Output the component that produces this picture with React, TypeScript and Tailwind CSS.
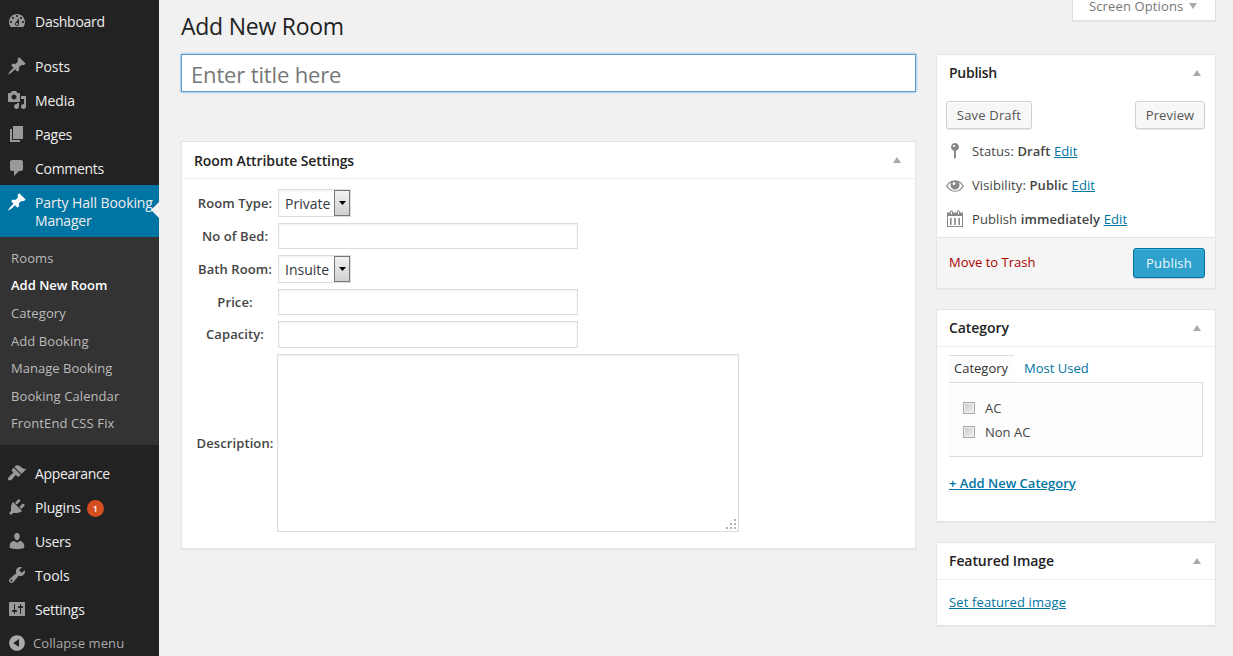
import React from "react";

const paths = {
  dashboard:
    "M3.76 16h12.48c1.1-1.37 1.76-3.11 1.76-5 0-4.42-3.58-8-8-8s-8 3.58-8 8c0 1.89.66 3.63 1.76 5zM10 4c.55 0 1 .45 1 1s-.45 1-1 1-1-.45-1-1 .45-1 1-1zM6 6c.55 0 1 .45 1 1s-.45 1-1 1-1-.45-1-1 .45-1 1-1zm8 0c.55 0 1 .45 1 1s-.45 1-1 1-1-.45-1-1 .45-1 1-1zm-5.37 5.55L12 7v6c0 1.1-.9 2-2 2s-2-.9-2-2c0-.57.24-1.08.63-1.45zM4 10c.55 0 1 .45 1 1s-.45 1-1 1-1-.45-1-1 .45-1 1-1zm12 0c.55 0 1 .45 1 1s-.45 1-1 1-1-.45-1-1 .45-1 1-1zm-5 3c0-.55-.45-1-1-1s-1 .45-1 1 .45 1 1 1 1-.45 1-1z",
  pin: "M10.44 3.02l1.82-1.82 6.36 6.35-1.83 1.82c-1.05-.68-2.48-.57-3.41.36l-.75.75c-.92.93-1.04 2.35-.35 3.41l-1.83 1.82-2.41-2.41-2.8 2.79c-.42.42-3.38 2.71-3.8 2.29s1.86-3.39 2.28-3.81l2.79-2.79L4.1 9.36l1.83-1.82c1.05.69 2.48.57 3.4-.36l.75-.75c.93-.92 1.05-2.35.36-3.41z",
  media:
    "M13 11V4c0-.55-.45-1-1-1h-1.67L9 1H5L3.67 3H2c-.55 0-1 .45-1 1v7c0 .55.45 1 1 1h10c.55 0 1-.45 1-1zM7 4.5c1.38 0 2.5 1.12 2.5 2.5S8.38 9.5 7 9.5 4.5 8.38 4.5 7 5.62 4.5 7 4.5zM14 6h5v10.5c0 1.38-1.12 2.5-2.5 2.5S14 17.88 14 16.5s1.12-2.5 2.5-2.5c.17 0 .34.02.5.05V9h-3V6zm-4 8.05V13h2v3.5c0 1.38-1.12 2.5-2.5 2.5S7 17.88 7 16.5 8.12 14 9.5 14c.17 0 .34.02.5.05z",
  page: "M6 15V2h10v13H6zm-1 1h8v2H3V5h2v11z",
  comments: "M5 2h9c1.1 0 2 .9 2 2v7c0 1.1-.9 2-2 2h-2l-5 5v-5H5c-1.1 0-2-.9-2-2V4c0-1.1.9-2 2-2z",
  appearance:
    "M14.48 11.06L7.41 3.99l1.5-1.5c.5-.56 2.3-.47 3.51.32 1.21.8 1.43 1.28 2.91 2.1 1.18.64 2.45 1.26 4.45.85zm-.71.71L6.7 4.7 4.93 6.47c-.39.39-.39 1.02 0 1.41l1.06 1.06c.39.39.39 1.03 0 1.42-.6.6-1.43 1.11-2.21 1.69-.35.26-.7.53-1.01.84C1.43 14.23.4 16.08 1.4 17.07c.99 1 2.84-.03 4.18-1.36.31-.31.58-.66.85-1.02.57-.78 1.08-1.61 1.69-2.21.39-.39 1.02-.39 1.41 0l1.06 1.06c.39.39 1.02.39 1.41 0z",
  plugins:
    "M13.11 4.36L9.87 7.6 8 5.73l3.24-3.24c.35-.34 1.05-.2 1.56.32.52.51.66 1.21.31 1.55zm-8 1.77l.91-1.12 9.01 9.01-1.19.84c-.71.71-2.63 1.16-3.82 1.16H6.14L4.9 17.26c-.59.59-1.54.59-2.12 0-.59-.58-.59-1.53 0-2.12l1.24-1.24v-3.88c0-1.13.4-3.19 1.09-3.89zm7.26 3.97l3.24-3.24c.34-.35 1.04-.21 1.55.31.52.51.66 1.21.31 1.55l-3.24 3.25z",
  users:
    "M10 9.25c-2.27 0-2.73-3.44-2.73-3.44C7 4.02 7.82 2 9.97 2c2.16 0 2.98 2.02 2.71 3.81 0 0-.41 3.44-2.68 3.44zm0 2.57L12.72 10c2.39 0 4.52 2.33 4.52 4.53v2.49s-3.65 1.13-7.24 1.13c-3.65 0-7.24-1.13-7.24-1.13v-2.49c0-2.25 1.94-4.48 4.47-4.48z",
  tools:
    "M16.68 9.77c-1.34 1.34-3.3 1.67-4.95.99l-5.41 6.52c-.99.99-2.59.99-3.58 0s-.99-2.59 0-3.57l6.52-5.42c-.68-1.65-.35-3.61.99-4.95 1.28-1.28 3.12-1.62 4.72-1.06l-2.89 2.89 2.82 2.82 2.86-2.87c.53 1.58.18 3.39-1.08 4.65zM3.81 16.21c.4.39 1.04.39 1.43 0 .4-.4.4-1.04 0-1.43-.39-.4-1.03-.4-1.43 0-.39.39-.39 1.03 0 1.43z",
  settings:
    "M18 16V4c0-.55-.45-1-1-1H3c-.55 0-1 .45-1 1v12c0 .55.45 1 1 1h14c.55 0 1-.45 1-1zM8 11h1c.55 0 1 .45 1 1s-.45 1-1 1H8v1.5c0 .28-.22.5-.5.5s-.5-.22-.5-.5V13H6c-.55 0-1-.45-1-1s.45-1 1-1h1V5.5c0-.28.22-.5.5-.5s.5.22.5.5V11zm5-2h-1c-.55 0-1-.45-1-1s.45-1 1-1h1V5.5c0-.28.22-.5.5-.5s.5.22.5.5V7h1c.55 0 1 .45 1 1s-.45 1-1 1h-1v5.5c0 .28-.22.5-.5.5s-.5-.22-.5-.5V9z",
  collapse:
    "M10 2.16c4.33 0 7.84 3.51 7.84 7.84s-3.51 7.84-7.84 7.84S2.16 14.33 2.16 10 5.71 2.16 10 2.16zm2 11.72V6.12L6.18 9.97z",
  status:
    "M14 6c0 1.86-1.28 3.41-3 3.86V16c0 1-2 2-2 2V9.86c-1.72-.45-3-2-3-3.86 0-2.21 1.79-4 4-4s4 1.79 4 4zM8 5c0 .55.45 1 1 1s1-.45 1-1-.45-1-1-1-1 .45-1 1z",
  visibility:
    "M10 5.2c-4 0-7 2.4-9 5.800 2 3.400 5 5.800 9 5.800s7-2.400 9-5.800c-2-3.400-5-5.800-9-5.800zM10 15.700c-3.200 0-5.700-1.700-7.500-4.700 1-1.700 2.300-3 3.900-3.800a4.600 4.600 0 0 0-.9 2.800c0 2.500 2 4.500 4.500 4.500s4.500-2 4.500-4.500c0-1.100-.3-2.000-.9-2.800 1.600.8 2.900 2.100 3.900 3.800-1.800 3-4.300 4.700-7.500 4.700zM9 7a1.500 1.500 0 1 1 0 3 1.500 1.500 0 0 1 0-3z",
  calendar:
    "M15 3.500h3V18H2V3.500h3V3c0-.83.67-1.500 1.500-1.500S8 2.170 8 3v.5h4V3c0-.83.67-1.500 1.500-1.500S15 2.170 15 3v.5zM6 3v2c0 .28.22.5.5.5S7 5.280 7 5V3c0-.28-.22-.5-.5-.5S6 2.720 6 3zm7 0v2c0 .28.22.5.5.5s.5-.22.5-.5V3c0-.28-.22-.5-.5-.5s-.5.22-.5.5zm4 14V7H3v10h14zM5 9h1.600v7H5V9zm4.200 0h1.600v7H9.200V9zm4.200 0H15v7h-1.600V9z",
};

type IconName = keyof typeof paths;

function Icon({ name, className }: { name: IconName; className: string }) {
  return (
    <svg viewBox="0 0 20 20" fillRule="evenodd" className={`h-5 w-5 shrink-0 fill-current ${className}`}>
      <path d={paths[name]} />
    </svg>
  );
}

function MenuItem({ icon, label, tracking, badge }: { icon: IconName; label: string; tracking: string; badge?: string }) {
  return (
    <a className="flex h-[34px] shrink-0 items-center pl-[7px] text-[14px] text-[#eee]">
      <Icon name={icon} className="text-[#999]" />
      <span className={`ml-2 ${tracking}`}>{label}</span>
      {badge && (
        <span className="ml-[6px] mt-[2px] flex h-[17px] w-[17px] items-center justify-center rounded-full bg-[#d54e21] text-[9px] font-semibold leading-[17px] text-white">
          {badge}
        </span>
      )}
    </a>
  );
}

const submenu = [
  { label: "Rooms", style: "tracking-[0.150px]" },
  { label: "Add New Room", style: "tracking-[0px] font-semibold text-white pb-[1px]" },
  { label: "Category", style: "tracking-[0.100px]" },
  { label: "Add Booking", style: "tracking-[0.080px]" },
  { label: "Manage Booking", style: "tracking-[0.020px]" },
  { label: "Booking Calendar", style: "tracking-[0.080px]" },
  { label: "FrontEnd CSS Fix", style: "tracking-[0.120px]" },
];

function Sidebar() {
  return (
    <nav className="flex h-full w-[159px] shrink-0 flex-col bg-[#222] pt-1">
      <MenuItem icon="dashboard" label="Dashboard" tracking="tracking-[-0.270px]" />
      <div className="h-[11px] shrink-0" />
      <MenuItem icon="pin" label="Posts" tracking="tracking-[0px]" />
      <MenuItem icon="media" label="Media" tracking="tracking-[-0.100px]" />
      <MenuItem icon="page" label="Pages" tracking="tracking-[-0.300px]" />
      <MenuItem icon="comments" label="Comments" tracking="tracking-[-0.300px]" />
      <a className="relative flex h-[52px] shrink-0 bg-[#0074a2] pl-[7px] pt-[7px] text-[14px] leading-[18px] text-[#eee]">
        <Icon name="pin" className="text-white" />
        <span className="ml-2 mt-[2px] whitespace-nowrap tracking-[-0.080px]">
          Party Hall Booking
          <br />
          <span className="tracking-[-0.200px]">Manager</span>
        </span>
        <svg viewBox="0 0 8 16" className="absolute right-0 top-[17px] h-4 w-2 fill-[#f1f1f1]">
          <path d="M8 0v16L0 8z" />
        </svg>
      </a>
      <div className="flex h-[208px] shrink-0 flex-col bg-[#333] pt-2 text-[13px] text-[#bbb]">
        {submenu.map((item) => (
          <a key={item.label} className={`flex h-[27.500px] shrink-0 items-center pl-[11px] ${item.style}`}>
            {item.label}
          </a>
        ))}
      </div>
      <div className="h-[11px] shrink-0" />
      <MenuItem icon="appearance" label="Appearance" tracking="tracking-[-0.350px]" />
      <MenuItem icon="plugins" label="Plugins" badge="1" tracking="tracking-[-0.150px]" />
      <MenuItem icon="users" label="Users" tracking="tracking-[-0.250px]" />
      <MenuItem icon="tools" label="Tools" tracking="tracking-[0px]" />
      <MenuItem icon="settings" label="Settings" tracking="tracking-[-0.300px]" />
      <a className="flex h-[34px] shrink-0 items-center pl-[7px] text-[13px] text-[#aaa]">
        <Icon name="collapse" className="text-[#aaa]" />
        <span className="ml-[6px] mt-[1px] tracking-[0.100px]">Collapse menu</span>
      </a>
    </nav>
  );
}

function Box({ title, className, divider = "border-[#eee]", titleClass, children }: { title: string; className: string; divider?: string; titleClass: string; children: React.ReactNode }) {
  return (
    <section className={`flex flex-col border border-[#e5e5e5] bg-white shadow-[0_1px_1px_rgba(0,0,0,0.04)] ${className}`}>
      <h2 className={`flex h-[37px] shrink-0 items-center justify-between border-b pl-3 pr-[14px] text-[14px] font-semibold text-[#222] ${divider}`}>
        <span className={titleClass}>{title}</span>
        <svg viewBox="0 0 8 6" className="h-[6px] w-2 fill-[#aaa]">
          <path d="M4 0l4 6H0z" />
        </svg>
      </h2>
      {children}
    </section>
  );
}

function SelectBox({ value }: { value: string }) {
  return (
    <div className="flex h-7 w-[73px] border border-[#ddd] bg-white text-[14px] text-[#32373c] shadow-[inset_0_1px_2px_rgba(0,0,0,0.07)]">
      <span className="flex flex-1 items-center pl-[6px]">{value}</span>
      <span className="flex w-4 items-center justify-center border border-[#777] bg-gradient-to-b from-[#f2f2f2] to-[#cfcfcf]">
        <svg viewBox="0 0 7 4" className="h-1 w-[7px] fill-black">
          <path d="M0 0h7L3.500 4z" />
        </svg>
      </span>
    </div>
  );
}

function TextField() {
  return <input className="block h-full w-[300px] border border-[#ddd] bg-white shadow-[inset_0_1px_2px_rgba(0,0,0,0.07)] outline-none" />;
}

function Row({ label, labelClass = "pt-[2px]", className, children }: { label: string; labelClass?: string; className: string; children: React.ReactNode }) {
  return (
    <div className={`flex ${className}`}>
      <label className={`flex w-[78px] items-center justify-center whitespace-nowrap font-semibold tracking-[0.100px] text-[#444] ${labelClass}`}>{label}</label>
      {children}
    </div>
  );
}

function Main() {
  return (
    <main className="flex w-[735px] flex-col">
      <h1 className="mt-[10px] h-8 text-[23px] leading-8 tracking-[-0.250px] text-[#222]">Add New Room</h1>
      <input
        placeholder="Enter title here"
        className="mt-3 h-[38px] w-full border border-[#5b9dd9] bg-white px-[9px] pt-[2px] text-[22px] tracking-[-0.150px] shadow-[0_0_2px_rgba(30,140,190,0.8)] outline-none placeholder:text-[#777]"
      />
      <Box title="Room Attribute Settings" className="mt-[49px] h-[408px]" titleClass="tracking-[-0.100px]">
        <div className="flex flex-col pl-[14px] pt-[10px]">
          <Row label="Room Type:" className="h-7 gap-[4px]">
            <SelectBox value="Private" />
          </Row>
          <Row label="No of Bed:" className="mt-[6px] h-[26px] gap-[4px]">
            <TextField />
          </Row>
          <Row label="Bath Room:" className="mt-[6px] h-7 gap-[4px]">
            <SelectBox value="Insuite" />
          </Row>
          <Row label="Price:" className="mt-[6px] h-[26px] gap-[4px]">
            <TextField />
          </Row>
          <Row label="Capacity:" labelClass="pt-0" className="mt-[6px] h-[27px] gap-[4px]">
            <TextField />
          </Row>
          <Row label="Description:" className="mt-[6px] h-[178px] gap-[3px]">
            <div className="flex w-[462px] items-end justify-end border border-[#ddd] bg-white pb-[1px] pr-[1px] shadow-[inset_0_1px_2px_rgba(0,0,0,0.07)]">
              <svg viewBox="0 0 11 11" className="h-[11px] w-[11px] fill-[#b5b5b5]">
                <path d="M8 0h2v2H8zM4 4h2v2H4zM8 4h2v2H8zM0 8h2v2H0zM4 8h2v2H4zM8 8h2v2H8z" />
              </svg>
            </div>
          </Row>
        </div>
      </Box>
    </main>
  );
}

function Button({ label, className }: { label: string; className: string }) {
  return (
    <button className={`flex h-7 items-center justify-center rounded-[3px] border border-[#d0d0d0] bg-[#f7f7f7] pt-[2px] text-[13px] text-[#555] shadow-[inset_0_1px_0_#fff,0_1px_0_rgba(0,0,0,0.08)] ${className}`}>
      {label}
    </button>
  );
}

function PublishRow({ icon, children }: { icon: IconName; children: React.ReactNode }) {
  return (
    <div className="flex h-[34px] items-center pl-2">
      <Icon name={icon} className="text-[#888]" />
      <span className="ml-[7px] mt-[2px] whitespace-nowrap tracking-[0.100px]">{children}</span>
    </div>
  );
}

function Edit() {
  return <a className="text-[#0074a2] underline">Edit</a>;
}

function Check({ label }: { label: string }) {
  return (
    <label className="flex h-6 items-center">
      <span className="flex h-3 w-3 border border-[#aaa] bg-gradient-to-br from-[#c4c8cd] to-[#f3f3f3] shadow-[inset_0_0_0_1px_#eee]" />
      <span className="ml-[10px] mt-[2px]">{label}</span>
    </label>
  );
}

function Aside() {
  return (
    <aside className="flex w-[280px] flex-col">
      <div className="ml-[136px] flex h-[21px] w-[144px] items-start border border-t-0 border-[#ddd] bg-white pl-4 text-[13px] leading-[13px] text-[#777] shadow-[0_1px_1px_rgba(0,0,0,0.04)]">
        <span className="tracking-[0.130px]">Screen Options</span>
        <svg viewBox="0 0 8 6" className="ml-[6px] mt-[3px] h-[6px] w-2 fill-[#aaa]">
          <path d="M0 0h8L4 6z" />
        </svg>
      </div>
      <Box title="Publish" divider="border-white" className="mt-[33px] h-[235px]" titleClass="-mt-[2px] tracking-[-0.250px]">
        <div className="flex justify-between pl-[9px] pr-[10px] pt-[9px]">
          <Button label="Save Draft" className="w-[86px] tracking-[0.180px]" />
          <Button label="Preview" className="w-[70px] tracking-[0.150px]" />
        </div>
        <div className="mt-[5px] flex flex-col">
          <PublishRow icon="status">
            Status: <b className="font-semibold">Draft</b> <Edit />
          </PublishRow>
          <PublishRow icon="visibility">
            Visibility: <b className="font-semibold">Public</b> <Edit />
          </PublishRow>
          <PublishRow icon="calendar">
            Publish <b className="font-semibold">immediately</b> <Edit />
          </PublishRow>
        </div>
        <div className="mt-[1px] flex flex-1 items-center justify-between border-t border-[#e5e5e5] bg-[#f5f5f5] pl-3 pr-[10px]">
          <a className="text-[#a00]">Move to Trash</a>
          <button className="flex h-[30px] w-[72px] items-center justify-center rounded-[3px] border border-[#0074a2] bg-[#2ea2cc] pt-[2px] tracking-[0.200px] text-[#eef8fc] shadow-[inset_0_1px_0_rgba(120,200,230,0.5),0_1px_0_rgba(0,0,0,0.15)]">
            Publish
          </button>
        </div>
      </Box>
      <Box title="Category" className="mt-5 h-[213px]" titleClass="-mt-[2px] tracking-[-0.080px]">
        <div className="flex flex-col items-start pl-3 pt-2">
          <div className="flex h-[27px]">
            <span className="flex w-[65px] items-center border-t border-[#ddd] bg-[#fdfdfd] pl-[5px] text-[#333]">Category</span>
            <span className="flex items-center pl-[10px] pt-[1px] text-[#0074a2]">Most Used</span>
          </div>
          <div className="flex h-[75px] w-[254px] flex-col border border-l-0 border-[#ddd] bg-[#fdfdfd] pl-[14px] pt-[13px]">
            <Check label="AC" />
            <Check label="Non AC" />
          </div>
          <a className="mt-[17px] font-semibold text-[#0074a2] underline">+ Add New Category</a>
        </div>
      </Box>
      <Box title="Featured Image" className="mt-5 h-[84px]" titleClass="-mt-[2px] tracking-[-0.080px]">
        <div className="flex flex-1 items-center pl-3 text-[#0074a2]">
          <a className="tracking-[0.130px] underline">Set featured image</a>
        </div>
      </Box>
    </aside>
  );
}

export default function App() {
  return (
    <div className="flex h-[656px] w-[1233px] overflow-hidden bg-[#f1f1f1] font-['Open_Sans',sans-serif] text-[13px] text-[#444]">
      <Sidebar />
      <div className="flex gap-5 pl-[22px]">
        <Main />
        <Aside />
      </div>
    </div>
  );
}
